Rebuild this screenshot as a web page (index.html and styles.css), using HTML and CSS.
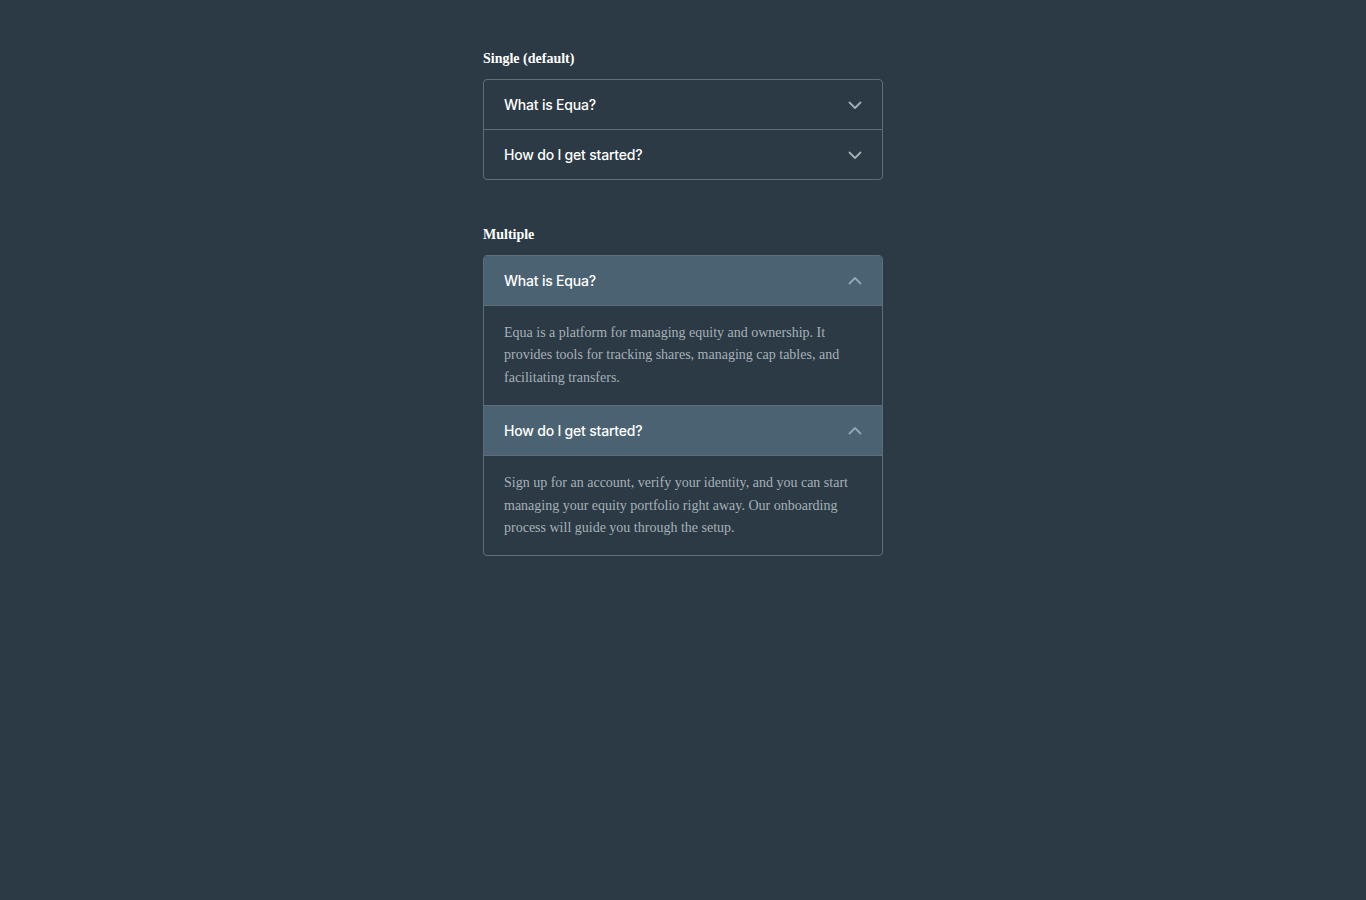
FILE: index.html
```html
<!DOCTYPE html>
<html lang="en">
<head>
    <meta charset="UTF-8">
    <meta name="viewport" content="width=device-width, initial-scale=1.0">
    <title>Accordion</title>
    <link rel="stylesheet" href="styles.css">
</head>
<body>
    <div class="page">
        <section class="demo">
            <h3>Single (default)</h3>
            <div class="accordion">
                <div class="item">
                    <button class="trigger">
                        <span>What is Equa?</span>
                        <svg class="chevron" width="16" height="16" viewBox="0 0 16 16"><path d="M2.5 5.5 L8 11 L13.5 5.5"/></svg>
                    </button>
                </div>
                <div class="item">
                    <button class="trigger">
                        <span>How do I get started?</span>
                        <svg class="chevron" width="16" height="16" viewBox="0 0 16 16"><path d="M2.5 5.5 L8 11 L13.5 5.5"/></svg>
                    </button>
                </div>
            </div>
        </section>

        <section class="demo">
            <h3>Multiple</h3>
            <div class="accordion">
                <div class="item open">
                    <button class="trigger">
                        <span>What is Equa?</span>
                        <svg class="chevron" width="16" height="16" viewBox="0 0 16 16"><path d="M2.5 10.5 L8 5 L13.5 10.5"/></svg>
                    </button>
                    <div class="content">
                        Equa is a platform for managing equity and ownership. It provides tools for tracking shares, managing cap tables, and facilitating transfers.
                    </div>
                </div>
                <div class="item open">
                    <button class="trigger">
                        <span>How do I get started?</span>
                        <svg class="chevron" width="16" height="16" viewBox="0 0 16 16"><path d="M2.5 10.5 L8 5 L13.5 10.5"/></svg>
                    </button>
                    <div class="content">
                        Sign up for an account, verify your identity, and you can start managing your equity portfolio right away. Our onboarding process will guide you through the setup.
                    </div>
                </div>
            </div>
        </section>
    </div>
</body>
</html>
```
FILE: styles.css
```css
body {
    margin: 0;
    background-color: #2b3a44;
    font-family: "Liberation Serif", "Times New Roman", serif;
    color: #ffffff;
}
.page {
    width: 400px;
    margin: 0 auto;
    padding-top: 49px;
    display: flex;
    flex-direction: column;
    gap: 45px;
}
.demo h3 {
    margin: 0 0 10px;
    font-size: 14px;
    line-height: 20px;
    font-weight: bold;
    color: #ffffff;
}
.accordion {
    border: 1px solid #5d6e79;
    border-radius: 4px;
    overflow: hidden;
}
.item + .item {
    border-top: 1px solid #5d6e79;
}
.trigger {
    width: 100%;
    height: 49px;
    padding: 0 19px 0 20px;
    display: flex;
    align-items: center;
    justify-content: space-between;
    background: transparent;
    border: none;
    color: #ffffff;
    font-family: Inter, "Noto Sans", sans-serif;
    font-size: 14px;
    font-weight: 500;
    letter-spacing: -0.2px;
    cursor: pointer;
}
.chevron {
    fill: none;
    stroke: #a3afb7;
    stroke-width: 1.8;
    stroke-linecap: round;
    stroke-linejoin: round;
}
.open .trigger {
    background-color: #4a6272;
    border-bottom: 1px solid #5d6e79;
    height: 50px;
}
.open .chevron {
    stroke: #93a6b3;
}
.content {
    padding: 16px 20px 16px;
    font-size: 14px;
    line-height: 22.4px;
    color: #a7b1b8;
}
```
